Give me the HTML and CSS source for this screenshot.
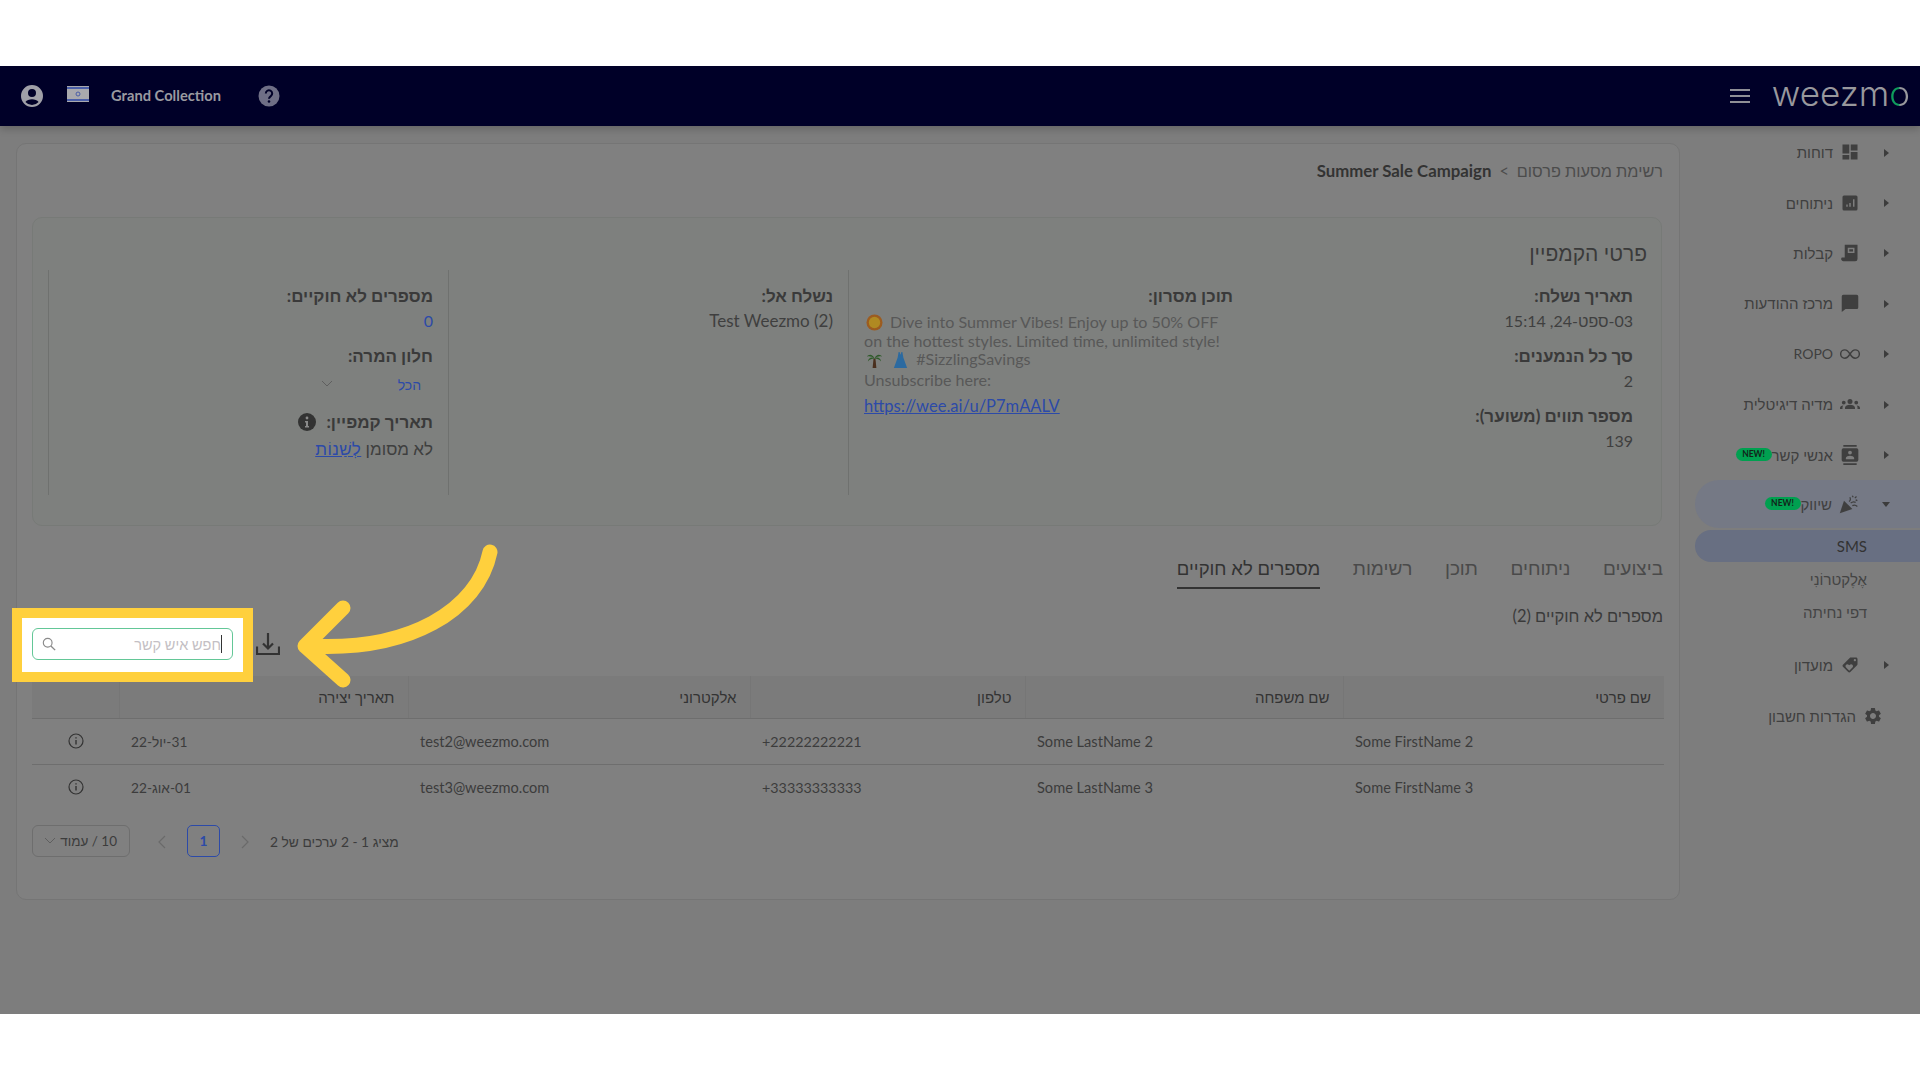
FILE: index.html
```html
<!DOCTYPE html>
<html lang="he" dir="rtl">

<head>
    <meta charset="UTF-8">
    <title>Summer Sale Campaign</title>
    <link rel="stylesheet" href="styles.css">
</head>

<body>

    <div class="band"></div>

    <div class="app">
        <header class="topbar">
            <div class="topbar-left">
                <svg class="user-icon" viewBox="0 0 24 24"><path d="M12 1a11 11 0 1 0 0 22 11 11 0 0 0 0-22zm0 4a4 4 0 1 1 0 8 4 4 0 0 1 0-8zm0 16a8.800 8.800 0 0 1-6.600-3c1.300-1.800 4-2.800 6.600-2.800s5.300 1 6.600 2.800A8.800 8.800 0 0 1 12 21z"/></svg>
                <svg class="flag" viewBox="0 0 22 16"><rect width="22" height="16" fill="#a9a9ad"/><rect y="1" width="22" height="2" fill="#4a5ea8"/><rect y="13" width="22" height="2" fill="#4a5ea8"/><circle cx="11" cy="8" r="2" fill="none" stroke="#4a5ea8"/></svg>
                <span class="org">Grand Collection</span>
                <svg class="help-icon" viewBox="0 0 22 22"><circle cx="11" cy="11" r="10.500" fill="#6f6f86"/><path d="M7.800 8.500a3.200 3.200 0 1 1 5 2.600c-1.200.8-1.800 1.400-1.800 2.700" fill="none" stroke="#000028" stroke-width="2"/><circle cx="11" cy="16.500" r="1.300" fill="#000028"/></svg>
            </div>
            <div class="topbar-right">
                <div class="burger"><i></i><i></i><i></i></div>
                <div class="logo">weezm<span class="logo-o">o</span></div>
            </div>
        </header>

        <div class="content">
            <nav class="sidebar">
                <a class="side-item"><span class="caret"></span>
                    <svg class="side-icon" viewBox="0 0 24 24"><path d="M2 2h9v12H2zM13 2h9v8h-9zM2 16h9v6H2zM13 12h9v10h-9z"/></svg>
                    <span>דוחות</span></a>
                <a class="side-item"><span class="caret"></span>
                    <svg class="side-icon" viewBox="0 0 24 24"><path d="M4 2h16a2 2 0 0 1 2 2v16a2 2 0 0 1-2 2H4a2 2 0 0 1-2-2V4a2 2 0 0 1 2-2zm3 12v3h2v-3zm4-2v5h2v-5zm5-5v10h2V7z" fill-rule="evenodd"/></svg>
                    <span>ניתוחים</span></a>
                <a class="side-item"><span class="caret"></span>
                    <svg class="side-icon" viewBox="0 0 24 24"><path d="M5 1h17v19a3 3 0 0 1-3 3H3a3 3 0 0 1-2-5h4zm4 4v7h9V5zm2 2h5v3h-5z" fill-rule="evenodd"/></svg>
                    <span>קבלות</span></a>
                <a class="side-item"><span class="caret"></span>
                    <svg class="side-icon" viewBox="0 0 24 24"><path d="M3 1h18a2 2 0 0 1 2 2v15a2 2 0 0 1-2 2H6l-5 4V3a2 2 0 0 1 2-2z"/></svg>
                    <span>מרכז ההודעות</span></a>
                <a class="side-item"><span class="caret"></span>
                    <svg class="side-icon infinity" viewBox="0 0 24 14"><path d="M12 7C9.500 3 8 2 5.800 2a5 5 0 0 0 0 10c2.200 0 3.700-1 6.200-5s4-5 6.200-5a5 5 0 0 1 0 10C16 12 14.500 11 12 7z" fill="none" stroke="currentColor" stroke-width="1.700"/></svg>
                    <span class="ropo" dir="ltr">ROPO</span></a>
                <a class="side-item"><span class="caret"></span>
                    <svg class="side-icon wide" viewBox="0 0 24 24"><path d="M12 6a3 3 0 1 1 0 6 3 3 0 0 1 0-6zM4.500 8a2.300 2.300 0 1 1 0 4.600 2.300 2.300 0 0 1 0-4.600zm15 0a2.300 2.300 0 1 1 0 4.600 2.300 2.300 0 0 1 0-4.600zM6 18v-1.500c0-2 3-3.500 6-3.500s6 1.500 6 3.500V18zM0 18v-1.200c0-1.500 1.500-2.800 4-3-.8.800-1 1.700-1 2.700V18zm24 0v-1.200c0-1.500-1.500-2.800-4-3 .8.800 1 1.700 1 2.700V18z"/></svg>
                    <span>מדיה דיגיטלית</span></a>
                <a class="side-item"><span class="caret"></span>
                    <svg class="side-icon tall" viewBox="0 0 24 24"><path d="M4 0h16v2H4zM4 22h16v2H4zM4 4h16a2 2 0 0 1 2 2v12a2 2 0 0 1-2 2H4a2 2 0 0 1-2-2V6a2 2 0 0 1 2-2zm8 2.800a2.300 2.300 0 1 0 0 4.600 2.300 2.300 0 0 0 0-4.600zM7 17h10v-1.500c0-1.700-3.300-2.500-5-2.500s-5 .8-5 2.500z" fill-rule="evenodd"/></svg>
                    <span>אנשי קשר</span><span class="badge">NEW!</span></a>
                <a class="side-item open"><span class="caret down"></span>
                    <svg class="side-icon wide" viewBox="0 0 24 24"><path d="M1 23l5-15 10 10z"/><path d="M12 9c2-1 2-3 1-5M14 11c2-2 4-2 6-1M16 14c2-1 4-1 6 1M16 2l1 2M21 3l-2 2M22 8l-2-1" fill="none" stroke="currentColor" stroke-width="1.500"/></svg>
                    <span>שיווק</span><span class="badge">NEW!</span></a>
                <a class="sub-item active">SMS</a>
                <a class="sub-item">אֶלֶקטרוֹנִי</a>
                <a class="sub-item">דפי נחיתה</a>
                <a class="side-item club"><span class="caret"></span>
                    <svg class="side-icon tag" viewBox="0 0 24 24"><path d="M21.410 11.580l-9-9C12.050 2.220 11.550 2 11 2H4c-1.100 0-2 .9-2 2v7c0 .55.22 1.050.59 1.420l9 9c.36.36.86.58 1.410.58s1.050-.22 1.410-.59l7-7c.37-.36.59-.86.59-1.410s-.23-1.060-.59-1.420zM5.500 7C4.670 7 4 6.330 4 5.500S4.670 4 5.500 4 7 4.670 7 5.500 6.330 7 5.500 7zm11.770 8.270L13 19.540l-4.270-4.270C8.280 14.810 8 14.190 8 13.500c0-1.380 1.120-2.500 2.500-2.500.69 0 1.320.28 1.770.74l.73.72.73-.73c.45-.45 1.080-.73 1.770-.73 1.380 0 2.500 1.120 2.500 2.500 0 .69-.28 1.320-.73 1.770z"/></svg>
                    <span>מועדון</span></a>
                <a class="side-item settings">
                    <svg class="side-icon gear" viewBox="0 0 24 24"><path d="M19.140 12.940c.04-.3.06-.61.06-.94 0-.32-.02-.64-.07-.94l2.030-1.580a.49.49 0 0 0 .12-.61l-1.920-3.320a.488.488 0 0 0-.59-.22l-2.390.96c-.5-.38-1.030-.7-1.620-.94l-.36-2.540a.484.484 0 0 0-.48-.41h-3.840c-.24 0-.43.17-.47.41l-.36 2.540c-.59.24-1.130.57-1.620.94l-2.390-.96c-.22-.08-.47 0-.59.22L2.740 8.870c-.12.21-.08.47.12.61l2.030 1.580c-.05.3-.09.63-.09.94s.02.64.07.94l-2.030 1.580a.49.49 0 0 0-.12.61l1.920 3.320c.12.22.37.29.59.22l2.390-.96c.5.38 1.030.7 1.620.94l.36 2.540c.05.24.24.41.48.41h3.840c.24 0 .44-.17.47-.41l.36-2.540c.59-.24 1.130-.56 1.620-.94l2.390.96c.22.08.47 0 .59-.22l1.920-3.320c.12-.22.07-.47-.12-.61l-2.010-1.580zM12 15.600c-1.980 0-3.600-1.620-3.600-3.600s1.620-3.600 3.600-3.600 3.600 1.620 3.600 3.600-1.620 3.600-3.600 3.600z"/></svg>
                    <span>הגדרות חשבון</span></a>
            </nav>

            <main class="main">
                <div class="card">
                    <div class="crumbs">
                        <span class="crumb-root">רשימת מסעות פרסום</span>
                        <span class="crumb-sep">&gt;</span>
                        <b class="crumb-current">Summer Sale Campaign</b>
                    </div>

                    <section class="details">
                        <h2 class="details-title">פרטי הקמפיין</h2>
                        <div class="details-grid">
                            <div class="col">
                                <div class="field-label">תאריך נשלח:</div>
                                <div class="field-value">03-ספט-24, 15:14</div>
                                <div class="field-label">סך כל הנמענים:</div>
                                <div class="field-value">2</div>
                                <div class="field-label">מספר תווים (משוער):</div>
                                <div class="field-value">139</div>
                            </div>
                            <div class="col bordered">
                                <div class="field-label">תוכן מסרון:</div>
                                <div class="message" dir="ltr">
                                    <div><svg class="emoji" viewBox="0 0 18 18"><circle cx="9" cy="9" r="8.500" fill="#9c5c20"/><circle cx="9" cy="9" r="6" fill="#b08a22"/></svg> Dive into Summer Vibes! Enjoy up to 50% OFF</div>
                                    <div>on the hottest styles. Limited time, unlimited style!</div>
                                    <div><svg class="emoji" viewBox="0 0 18 18"><path d="M8 8h2l1 10H7z" fill="#4a2f1e"/><path d="M9 8C7 3 3 3 1 6c3-1 5 0 8 2zm0 0c2-5 6-5 8-2-3-1-5 0-8 2zM9 8C6 6 3 7 2 11c2-2 4-3 7-3zm0 0c3-2 6-1 7 3-2-2-4-3-7-3z" fill="#2f5a2a"/></svg> <svg class="emoji" viewBox="0 0 18 18"><path d="M7 1h1l1 3 1-3h1l1 6 4 11H2L6 7z" fill="#2c6aa0"/></svg> #SizzlingSavings</div>
                                    <div class="unsub">Unsubscribe here:</div>
                                    <a class="short-link">https://wee.ai/u/P7mAALV</a>
                                </div>
                            </div>
                            <div class="col bordered">
                                <div class="field-label">נשלח אל:</div>
                                <div class="field-value large">Test Weezmo (2)</div>
                            </div>
                            <div class="col bordered">
                                <div class="field-label">מספרים לא חוקיים:</div>
                                <div class="field-value blue">0</div>
                                <div class="field-label">חלון המרה:</div>
                                <div class="conv-select">
                                    <span class="blue">הכל</span>
                                    <svg class="chev" viewBox="0 0 12 8"><path d="M1 1l5 5 5-5" fill="none" stroke="#5f5f5f" stroke-width="1"/></svg>
                                </div>
                                <div class="field-label date-label">תאריך קמפיין:
                                    <svg class="info-solid" viewBox="0 0 18 18"><circle cx="9" cy="9" r="9" fill="#333"/><circle cx="9" cy="5" r="1.400" fill="#8a8a8a"/><path d="M7 8h3v5h1v1.500H7V13h1v-3.500H7z" fill="#8a8a8a"/></svg>
                                </div>
                                <div class="field-value large">לא מסומן <a class="change-link">לְשַׁנוֹת</a></div>
                            </div>
                        </div>
                    </section>

                    <div class="tabs">
                        <a class="tab">ביצועים</a>
                        <a class="tab">ניתוחים</a>
                        <a class="tab">תוכן</a>
                        <a class="tab">רשימות</a>
                        <a class="tab active">מספרים לא חוקיים</a>
                    </div>

                    <div class="invalid-count">מספרים לא חוקיים (2)</div>

                    <div class="toolbar">
                        <svg class="download" viewBox="0 0 24 22"><path d="M12 0v15M7 10.500l5 5 5-5" fill="none" stroke="#333" stroke-width="2.200"/><path d="M1 13.500V21h22v-7.500" fill="none" stroke="#333" stroke-width="2.200"/></svg>
                    </div>

                    <table class="grid">
                        <colgroup>
                            <col class="c-first"><col class="c-last"><col class="c-phone"><col class="c-mail"><col class="c-date"><col class="c-info">
                        </colgroup>
                        <thead>
                            <tr>
                                <th>שם פרטי</th>
                                <th>שם משפחה</th>
                                <th>טלפון</th>
                                <th>אלקטרוני</th>
                                <th>תאריך יצירה</th>
                                <th></th>
                            </tr>
                        </thead>
                        <tbody>
                            <tr>
                                <td dir="ltr">Some FirstName 2</td>
                                <td dir="ltr">Some LastName 2</td>
                                <td class="phone-cell" dir="ltr">+22222222221</td>
                                <td dir="ltr">test2@weezmo.com</td>
                                <td class="date-cell">31-יול-22</td>
                                <td class="info-cell"><svg class="info-line" viewBox="0 0 16 16"><circle cx="8" cy="8" r="7" fill="none" stroke="#333" stroke-width="1.200"/><path d="M8 7v4.500M8 4.200v1.400" stroke="#333" stroke-width="1.400"/></svg></td>
                            </tr>
                            <tr>
                                <td dir="ltr">Some FirstName 3</td>
                                <td dir="ltr">Some LastName 3</td>
                                <td class="phone-cell" dir="ltr">+33333333333</td>
                                <td dir="ltr">test3@weezmo.com</td>
                                <td class="date-cell">01-אוג-22</td>
                                <td class="info-cell"><svg class="info-line" viewBox="0 0 16 16"><circle cx="8" cy="8" r="7" fill="none" stroke="#333" stroke-width="1.200"/><path d="M8 7v4.500M8 4.200v1.400" stroke="#333" stroke-width="1.400"/></svg></td>
                            </tr>
                        </tbody>
                    </table>

                    <div class="pager">
                        <span class="pager-total">מציג 1 - 2 ערכים של 2</span>
                        <svg class="pager-arrow" viewBox="0 0 10 14"><path d="M2 1l6 6-6 6" fill="none" stroke="#6a6a6a" stroke-width="1.200"/></svg>
                        <span class="pager-num">1</span>
                        <svg class="pager-arrow" viewBox="0 0 10 14"><path d="M8 1L2 7l6 6" fill="none" stroke="#6a6a6a" stroke-width="1.200"/></svg>
                        <div class="pager-size">
                            <span>10 / עמוד</span>
                            <svg class="chev" viewBox="0 0 12 8"><path d="M1 1l5 5 5-5" fill="none" stroke="#5f5f5f" stroke-width="1"/></svg>
                        </div>
                    </div>
                </div>
            </main>
        </div>
    </div>

    <div class="band"></div>

    <!-- tutorial callout over the dimmed page -->
    <div class="spotlight">
        <div class="search">
            <span class="search-caret"></span>
            <span class="search-hint">חפש איש קשר</span>
            <svg class="search-icon" viewBox="0 0 16 16"><circle cx="6.500" cy="6.500" r="5" fill="none" stroke="#8a8a8a" stroke-width="1.300"/><path d="M10.200 10.200L15 15" stroke="#8a8a8a" stroke-width="1.600"/></svg>
        </div>
    </div>
    <svg class="arrow" viewBox="0 0 210 150"><path d="M200 12C188 70 120 112 17 106M53 68L15 106l38 34" fill="none" stroke="#ffd03d" stroke-width="15" stroke-linecap="round" stroke-linejoin="round"/></svg>

</body>

</html>
```

FILE: styles.css
```css
* {
    box-sizing: border-box;
}

html,
body {
    margin: 0;
    padding: 0;
    background: #fff;
}

body {
    font-family: Lato, "Liberation Sans", sans-serif;
    font-size: 15px;
    color: #3c3c3c;
    position: relative;
    width: 1920px;
    height: 1080px;
    overflow: hidden;
}

a {
    color: inherit;
    text-decoration: none;
}

.band {
    height: 66px;
    background: #fff;
}

.app {
    height: 948px;
    background: #7d7d7d;
    overflow: hidden;
}

.topbar {
    height: 60px;
    background: #000028;
    display: flex;
    justify-content: space-between;
    align-items: center;
    direction: ltr;
    box-shadow: 0 3px 8px rgba(0, 0, 0, 0.2);
    position: relative;
}

.topbar-left {
    display: flex;
    align-items: center;
    padding-left: 20px;
}

.user-icon {
    width: 24px;
    height: 24px;
    fill: #a0a0a8;
}

.flag {
    width: 22px;
    height: 16px;
    margin: -4px 0 0 23px;
}

.org {
    margin: -2px 0 0 22px;
    font-size: 14.700px;
    font-weight: 700;
    color: #9a9aa0;
    width: 147px;
}

.help-icon {
    width: 22px;
    height: 22px;
}

.topbar-right {
    display: flex;
    align-items: center;
    padding-right: 10px;
}

.burger {
    width: 20px;
    margin-right: 22px;
}

.burger i {
    display: block;
    height: 2px;
    background: #8f8f96;
    margin: 4px 0;
}

.logo {
    font-family: Inter, sans-serif;
    font-weight: 300;
    font-size: 35px;
    line-height: 40px;
    color: #98989d;
    margin-top: -6px;
}

.logo-o {
    background: linear-gradient(90deg, #0e9c5c 0 48%, #98989d 52%);
    -webkit-background-clip: text;
    background-clip: text;
    color: transparent;
}

.content {
    display: flex;
    height: 888px;
}

.sidebar {
    width: 225px;
    padding-top: 1px;
    flex-shrink: 0;
}

.side-item {
    height: 50.400px;
    display: flex;
    align-items: center;
    padding-right: 31px;
    font-size: 15px;
    color: #3f3f3f;
}

.ropo {
    font-size: 14px;
}

.caret {
    width: 0;
    height: 0;
    border-top: 4px solid transparent;
    border-bottom: 4px solid transparent;
    border-left: 5px solid #3c3c3c;
    margin: 1px 0 0 25px;
    flex-shrink: 0;
}

.caret.down {
    border-right: 4px solid transparent;
    border-left: 4px solid transparent;
    border-top: 5px solid #3c3c3c;
    border-bottom: 0;
    margin: 2px -1px 0 24px;
}

.side-icon {
    width: 18px;
    height: 18px;
    fill: currentColor;
    margin-left: 8px;
    flex-shrink: 0;
}

.side-icon.infinity {
    width: 20px;
    height: 12px;
    margin-right: -1px;
    margin-left: 7px;
}

.side-icon.wide {
    width: 20px;
    height: 20px;
    margin-right: -1px;
    margin-left: 7px;
}

.side-icon.tall {
    width: 20px;
    height: 22px;
    margin-right: -1px;
    margin-left: 7px;
}

.side-icon.tag {
    transform: scaleX(-1);
}

.badge {
    width: 36px;
    height: 13px;
    border-radius: 7px;
    background: #00a050;
    color: #12241a;
    font-size: 8.500px;
    font-weight: 700;
    line-height: 13px;
    text-align: center;
    direction: ltr;
}

.side-item.open {
    height: 48px;
    margin-bottom: 2px;
    background: #757985;
    border-top-left-radius: 24px;
    border-bottom-left-radius: 24px;
}

.sub-item {
    height: 33px;
    display: flex;
    align-items: center;
    padding: 1px 53px 0 0;
    font-size: 15px;
    color: #444;
}

.sub-item.active {
    height: 32px;
    padding-top: 0;
    background: #686f82;
    border-top-left-radius: 16px;
    border-bottom-left-radius: 16px;
    color: #333;
}

.side-item.club {
    margin-top: 12px;
}

.side-item.settings {
    padding: 2px 37px 0 0;
}

.side-icon.gear {
    width: 20px;
    height: 20px;
    margin-left: 7px;
}

.main {
    flex: 1;
    padding: 17px 15px 0 16px;
}

.card {
    height: 757px;
    background: #808080;
    border: 1px solid #757575;
    border-radius: 10px;
    padding: 0 15px;
}

.crumbs {
    height: 73px;
    padding: 17px 1px 0 0;
    font-size: 16.300px;
    line-height: 20px;
    display: flex;
    gap: 8px;
}

.crumb-root {
    color: #4c4c4c;
}

.crumb-sep {
    color: #4c4c4c;
}

.crumb-current {
    color: #333;
    font-size: 16.800px;
}

.details {
    height: 309px;
    margin-right: 2px;
    background: #7e807e;
    border: 1px solid #777a77;
    border-radius: 10px;
}

.details-title {
    margin: 0;
    padding: 23px 14px 0 0;
    font-size: 21px;
    font-weight: 400;
    line-height: 24px;
    color: #3a3a3a;
}

.details-grid {
    display: grid;
    grid-template-columns: repeat(4, 400px);
    margin: 5px 13px 0 0;
    height: 225px;
    justify-content: start;
}

.col {
    padding: 14px 15px 0 16px;
}

.col.bordered {
    border-left: 1px solid #6f716f;
}

.field-label {
    font-size: 17px;
    font-weight: 700;
    line-height: 24px;
    color: #3a3a3a;
}

.field-value {
    font-size: 16px;
    line-height: 25px;
    margin-bottom: 11px;
    color: #3f3f3f;
}

.field-value.large {
    font-size: 17px;
}

.blue {
    color: #2c4aa8;
}

.conv-select {
    display: flex;
    align-items: center;
    height: 32px;
    font-size: 14px;
    margin-bottom: 10px;
    padding-right: 12px;
}

.conv-select .chev {
    margin-right: 65px;
}

.chev {
    width: 12px;
    height: 8px;
}

.date-label {
    display: flex;
    align-items: center;
    gap: 9px;
    margin-bottom: 2px;
}

.info-solid {
    width: 18px;
    height: 18px;
    margin-right: 1px;
}

.change-link {
    color: #2c4aa8;
    text-decoration: underline;
    letter-spacing: 0.400px;
}

.message {
    margin: 5px 0 0 -1px;
    font-size: 16.100px;
    line-height: 18.500px;
    color: #585858;
}

.emoji {
    width: 17px;
    height: 17px;
    vertical-align: -3px;
    margin: 0 3px 0 2px;
}

.unsub {
    line-height: 22px;
}

.short-link {
    display: block;
    margin-top: 3px;
    line-height: 24px;
    font-size: 16.500px;
    color: #2c4aa8;
    text-decoration: underline;
}

.tabs {
    display: flex;
    gap: 32.500px;
    margin-top: 27px;
    padding-right: 1px;
    height: 36px;
    font-size: 19px;
    line-height: 30px;
    color: #4a4a4a;
}

.tab {
    height: 36px;
}

.tab.active {
    font-size: 18.500px;
    color: #333;
    border-bottom: 2px solid #333;
}

.invalid-count {
    margin-top: 17px;
    padding-right: 1px;
    font-size: 16.500px;
    line-height: 20px;
    color: #3a3a3a;
}

.toolbar {
    height: 50px;
    display: flex;
    align-items: center;
    justify-content: flex-end;
    padding-bottom: 14px;
}

.download {
    width: 24px;
    height: 22px;
    margin-left: 224px;
}

.grid {
    width: 1632px;
    border-collapse: collapse;
    table-layout: fixed;
    font-size: 14.600px;
    color: #3c3c3c;
}

.c-first { width: 321px; }
.c-last { width: 318px; }
.c-phone { width: 275px; }
.c-mail { width: 342px; }
.c-date { width: 289px; }
.c-info { width: 87px; }

.grid th {
    height: 42px;
    padding: 0 13px 0 12px;
    background: #7b7b7b;
    font-size: 15px;
    font-weight: 400;
    text-align: right;
    border-bottom: 1px solid #6e6e6e;
    border-left: 1px solid #767676;
    color: #333;
}

.grid th:last-child {
    border-left: 0;
}

.grid td {
    height: 46px;
    padding: 0 12px;
    text-align: left;
    border-bottom: 1px solid #6e6e6e;
}

.grid tr:last-child td {
    border-bottom: 0;
}

.grid td.phone-cell {
    font-size: 14.300px;
}

.grid td.date-cell {
    direction: rtl;
    font-size: 13.700px;
    padding-top: 1px;
}

.grid td.info-cell {
    text-align: center;
    padding: 0;
}

.info-line {
    width: 16px;
    height: 16px;
    display: block;
    margin: 0 auto;
}

.pager {
    display: flex;
    align-items: center;
    justify-content: flex-end;
    margin-top: 15px;
    font-size: 13.800px;
}

.pager-total {
    color: #3c3c3c;
}

.pager-arrow {
    width: 10px;
    height: 14px;
    margin: 2px 20px 0;
}

.pager-num {
    width: 33px;
    height: 32px;
    border: 1px solid #2c4aa8;
    border-radius: 5px;
    color: #2c4aa8;
    font-weight: 700;
    text-align: center;
    line-height: 30px;
}

.pager-size {
    width: 98px;
    height: 32px;
    margin-right: 7px;
    border: 1px solid #6e6e6e;
    border-radius: 6px;
    display: flex;
    align-items: center;
    justify-content: space-between;
    padding: 0 12px 0 11px;
    font-size: 13.500px;
}

.spotlight {
    position: absolute;
    left: 12px;
    top: 608px;
    width: 241px;
    height: 74px;
    border: 10px solid #ffd03d;
    background: #fff;
    padding: 10px;
}

.search {
    height: 32px;
    border: 1px solid #63c797;
    border-radius: 6px;
    display: flex;
    align-items: center;
    padding: 0 10px 0 9px;
    font-size: 14.500px;
    color: #c4bfc4;
}

.search-caret {
    width: 1px;
    height: 18px;
    background: #333;
}

.search-hint {
    flex: 1;
}

.search-icon {
    width: 14px;
    height: 14px;
}

.arrow {
    position: absolute;
    left: 290px;
    top: 540px;
    width: 210px;
    height: 150px;
}
```
